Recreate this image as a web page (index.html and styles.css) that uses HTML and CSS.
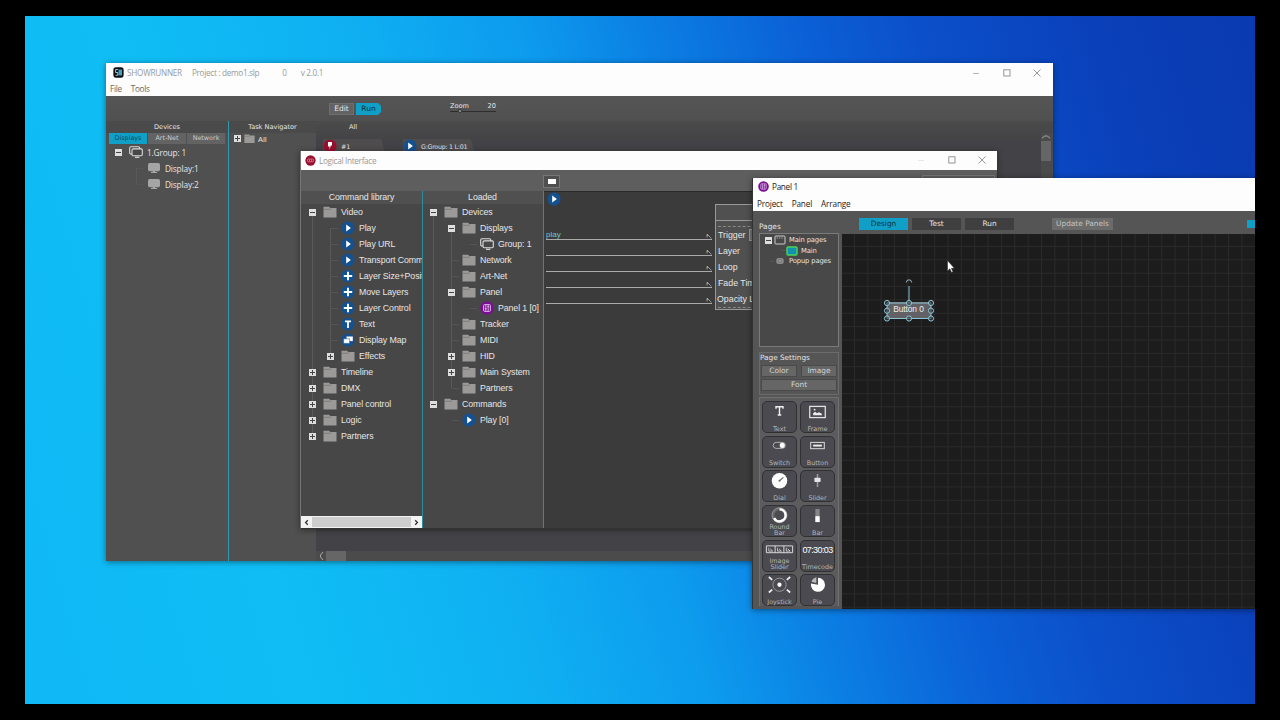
FILE: index.html
```html
<!DOCTYPE html>
<html lang="en">
<head>
    <meta charset="UTF-8">
    <title>Showrunner</title>
    <link rel="stylesheet" href="styles.css">
</head>
<body>

    <!-- shared icons -->
    <svg class="defs">
        <symbol id="folder" viewBox="0 0 14 12"><path d="M.5.8h5.600l1.200 1.300H13.500V11.600H.5z" fill="#9c9a99"/><path d="M.5 3.300h6.500l1.200-1" stroke="#6b6969" stroke-width=".6" fill="none"/></symbol>
        <symbol id="play" viewBox="0 0 14 14"><circle cx="7" cy="7" r="6.6" fill="#15508f"/><path d="M5.2 3.4v7.2L9.9 7z" fill="#fff"/></symbol>
        <symbol id="plus" viewBox="0 0 14 14"><circle cx="7" cy="7" r="6.6" fill="#15508f"/><path d="M7 2.8v8.4M2.8 7h8.4" stroke="#fff" stroke-width="1.9"/></symbol>
        <symbol id="tee" viewBox="0 0 14 14"><circle cx="7" cy="7" r="6.6" fill="#15508f"/><path d="M4 4.3h6M7 4.3V11" stroke="#fff" stroke-width="1.8"/></symbol>
        <symbol id="map" viewBox="0 0 14 14"><circle cx="7" cy="7" r="6.6" fill="#15508f"/><path d="M5.5 3.5h6.3v4.6H5.5z" fill="#fff"/><path d="M2.6 5.8h6v4.6h-6z" fill="#fff" stroke="#15508f" stroke-width=".5"/></symbol>
        <symbol id="group" viewBox="0 0 14 12"><rect x=".7" y=".8" width="10" height="7.2" rx="1.2" fill="#474747" stroke="#ddd" stroke-width="1.1"/><rect x="3" y="2.9" width="10.3" height="6.8" rx="1.2" fill="#474747" stroke="#ddd" stroke-width="1.1"/><path d="M6 11.3h4.3" stroke="#ddd" stroke-width="1.2"/></symbol>
        <symbol id="display" viewBox="0 0 14 12"><rect x="1" y="1" width="12" height="8.200" rx="1.800" fill="#a5a5a5"/><path d="M5.800 8.500h2.400v1.500h1.800v1H4v-1h1.800z" fill="#a5a5a5"/></symbol>
        <symbol id="panel" viewBox="0 0 14 14"><circle cx="7" cy="7" r="6.7" fill="#7a0f94"/><rect x="3.6" y="3.6" width="6.8" height="6.8" rx="1" fill="none" stroke="#e6c9ee" stroke-width=".9"/><path d="M5.8 4v6M8.2 4v6M4.8 7.8h2M7.2 5.8h2" stroke="#e6c9ee" stroke-width=".8"/></symbol>
        <symbol id="close" viewBox="0 0 10 10"><path d="M1.5 1.5l7 7M8.5 1.5l-7 7" stroke="#8b8b8b" stroke-width=".9"/></symbol>
        <symbol id="max" viewBox="0 0 10 10"><rect x="1.8" y="1.8" width="6.2" height="6.2" fill="none" stroke="#8b8b8b" stroke-width=".9"/></symbol>
        <symbol id="min" viewBox="0 0 10 10"><path d="M2 5.5h6" stroke="#a5a5a5" stroke-width=".8"/></symbol>
    </svg>

    <div class="desktop">

        <!-- main window -->
        <div class="window main">
            <div class="titlebar">
                <svg class="app" viewBox="0 0 12 12"><rect x=".4" y=".4" width="11.200" height="11.200" rx="2.800" fill="#0d1013"/><path d="M6 2.800h3.800v6.400H6z" fill="#3f9fc4"/><path d="M5.600 2.800H2.800V6h2.400v3H2.800" fill="none" stroke="#cfe6ee" stroke-width=".9"/></svg>
                <span class="t1">SHOWRUNNER</span><span class="t2">Project : demo1.slp</span><span class="t3">0</span><span>v 2.0.1</span>
                <div class="winctl"><svg><use href="#min"/></svg><svg><use href="#max"/></svg><svg><use href="#close"/></svg></div>
            </div>
            <div class="menu grey"><span>File</span><span>Tools</span></div>
            <div class="maintools">
                <span class="edit">Edit</span><span class="run">Run</span>
                <div class="zoom"><span>Zoom</span><span>20</span><i></i></div>
            </div>
            <div class="cols">
                <div class="devices">
                    <h3>Devices</h3>
                    <div class="devtabs"><span class="on">Displays</span><span>Art-Net</span><span>Network</span></div>
                    <div class="wide">
                        <div class="row"><b class="minus"></b><svg><use href="#group"/></svg>1.Group: 1</div>
                        <div class="tree kids">
                            <div class="row"><b class="stub"></b><svg><use href="#display"/></svg>Display:1</div>
                            <div class="row"><b class="stub"></b><svg><use href="#display"/></svg>Display:2</div>
                        </div>
                    </div>
                </div>
                <div class="tasks">
                    <h3>Task Navigator</h3>
                    <div class="row"><b class="plus"></b><svg><use href="#folder"/></svg>All</div>
                </div>
                <div class="stage">
                    <h3>All</h3>
                    <div class="cues">
                        <div class="cue">
                            <svg viewBox="0 0 14 14"><circle cx="7" cy="7" r="6.6" fill="#98102f"/><path d="M5 3h4v3.6H7.8L6.6 11V7.6H5z" fill="#fff"/></svg>#1
                        </div>
                        <div class="cue group"><svg><use href="#play"/></svg>G:Group: 1 L:01</div>
                    </div>
                    <div class="vscroll">
                        <svg viewBox="0 0 10 6"><path d="M.8 4.2L3.8 2h2.4l3 2.2" fill="none" stroke="#bbb" stroke-width=".8"/></svg><i></i>
                    </div>
                    <div class="hscroll">
                        <svg viewBox="0 0 6 10"><path d="M4.5 1L2 4v2l2.5 3" fill="none" stroke="#bbb" stroke-width=".8"/></svg><i></i>
                    </div>
                </div>
            </div>
        </div>

        <!-- logical interface -->
        <div class="window logic">
            <div class="titlebar">
                <svg class="app" viewBox="0 0 12 12"><circle cx="6" cy="6" r="5.600" fill="#98102f"/><rect x="2.8" y="4.4" width="6.4" height="3" rx=".6" fill="none" stroke="#d98b9b" stroke-width=".8"/><path d="M4.9 4.6v2.6M7.1 4.6v2.6" stroke="#d98b9b" stroke-width=".7"/></svg>
                <span>Logical Interface</span>
                <div class="winctl"><svg class="faint"><use href="#min"/></svg><svg><use href="#max"/></svg><svg><use href="#close"/></svg></div>
            </div>
            <div class="logictools"><span class="stop"></span><span class="ghost"></span></div>
            <div class="cols">
                <div class="pane">
                    <h4>Command library</h4>
                    <div class="tree">
                        <div class="row"><b class="minus"></b><svg><use href="#folder"/></svg>Video</div>
                        <div class="tree kids">
                            <div class="row"><b class="stub"></b><svg><use href="#play"/></svg>Play</div>
                            <div class="row"><b class="stub"></b><svg><use href="#play"/></svg>Play URL</div>
                            <div class="row"><b class="stub"></b><svg><use href="#play"/></svg>Transport Command</div>
                            <div class="row"><b class="stub"></b><svg><use href="#plus"/></svg>Layer Size+Position</div>
                            <div class="row"><b class="stub"></b><svg><use href="#plus"/></svg>Move Layers</div>
                            <div class="row"><b class="stub"></b><svg><use href="#plus"/></svg>Layer Control</div>
                            <div class="row"><b class="stub"></b><svg><use href="#tee"/></svg>Text</div>
                            <div class="row"><b class="stub"></b><svg><use href="#map"/></svg>Display Map</div>
                            <div class="row"><b class="plus"></b><svg><use href="#folder"/></svg>Effects</div>
                        </div>
                        <div class="row"><b class="plus"></b><svg><use href="#folder"/></svg>Timeline</div>
                        <div class="row"><b class="plus"></b><svg><use href="#folder"/></svg>DMX</div>
                        <div class="row"><b class="plus"></b><svg><use href="#folder"/></svg>Panel control</div>
                        <div class="row"><b class="plus"></b><svg><use href="#folder"/></svg>Logic</div>
                        <div class="row"><b class="plus"></b><svg><use href="#folder"/></svg>Partners</div>
                    </div>
                    <div class="libscroll">
                        <svg viewBox="0 0 11 11"><path d="M6.8 3.3L4.6 5.5l2.2 2.2" fill="none" stroke="#333" stroke-width="1.3"/></svg>
                        <i></i>
                        <svg viewBox="0 0 11 11"><path d="M4.2 3.3l2.2 2.2-2.2 2.2" fill="none" stroke="#333" stroke-width="1.3"/></svg>
                    </div>
                </div>
                <div class="pane loaded">
                    <h4>Loaded</h4>
                    <div class="tree">
                        <div class="row"><b class="minus"></b><svg><use href="#folder"/></svg>Devices</div>
                        <div class="tree kids">
                            <div class="row"><b class="minus"></b><svg><use href="#folder"/></svg>Displays</div>
                            <div class="row deep"><b class="stub"></b><svg><use href="#group"/></svg>Group: 1</div>
                            <div class="row"><b class="stub"></b><svg><use href="#folder"/></svg>Network</div>
                            <div class="row"><b class="stub"></b><svg><use href="#folder"/></svg>Art-Net</div>
                            <div class="row"><b class="minus"></b><svg><use href="#folder"/></svg>Panel</div>
                            <div class="row deep"><b class="stub"></b><svg><use href="#panel"/></svg>Panel 1 [0]</div>
                            <div class="row"><b class="stub"></b><svg><use href="#folder"/></svg>Tracker</div>
                            <div class="row"><b class="stub"></b><svg><use href="#folder"/></svg>MIDI</div>
                            <div class="row"><b class="plus"></b><svg><use href="#folder"/></svg>HID</div>
                            <div class="row"><b class="plus"></b><svg><use href="#folder"/></svg>Main System</div>
                            <div class="row"><b class="stub"></b><svg><use href="#folder"/></svg>Partners</div>
                        </div>
                        <div class="row"><b class="minus"></b><svg><use href="#folder"/></svg>Commands</div>
                    </div>
                    <div class="row cmd"><b class="stub"></b><svg><use href="#play"/></svg>Play [0]</div>
                </div>
                <div class="patch">
                    <div class="wires">
                        <svg class="start"><use href="#play"/></svg>
                        <div class="wire">play<svg viewBox="0 0 6 6"><path d="M1 4.5V1l4.5 4.5M1 2.5h1.5" fill="none" stroke="#aaa" stroke-width=".8"/></svg></div>
                        <div class="wire"><svg viewBox="0 0 6 6"><path d="M1 4.5V1l4.5 4.5M1 2.5h1.5" fill="none" stroke="#aaa" stroke-width=".8"/></svg></div>
                        <div class="wire"><svg viewBox="0 0 6 6"><path d="M1 4.5V1l4.5 4.5M1 2.5h1.5" fill="none" stroke="#aaa" stroke-width=".8"/></svg></div>
                        <div class="wire"><svg viewBox="0 0 6 6"><path d="M1 4.5V1l4.5 4.5M1 2.5h1.5" fill="none" stroke="#aaa" stroke-width=".8"/></svg></div>
                        <div class="wire"><svg viewBox="0 0 6 6"><path d="M1 4.5V1l4.5 4.5M1 2.5h1.5" fill="none" stroke="#aaa" stroke-width=".8"/></svg></div>
                    </div>
                    <div class="node">
                        <div class="nodehead"></div>
                        <div class="params">
                            <p>Trigger<i></i></p><p>Layer</p><p>Loop</p><p>Fade Time</p><p class="last">Opacity Le</p>
                        </div>
                    </div>
                </div>
            </div>
        </div>

        <!-- panel editor -->
        <div class="window editor">
            <div class="titlebar">
                <svg class="app"><use href="#panel"/></svg>
                <span>Panel 1</span>
            </div>
            <div class="menu"><span>Project</span><span>Panel</span><span>Arrange</span></div>
            <div class="cols">
                <div class="side">
                    <div class="label">Pages</div>
                    <div class="pages">
                        <div class="row"><b class="minus"></b><svg viewBox="0 0 12 10"><rect x="1" y="1" width="10" height="8" rx=".8" fill="none" stroke="#ddd" stroke-width=".9"/><path d="M2.5 3h7" stroke="#bbb" stroke-width=".8" stroke-dasharray="1.4 1"/></svg>Main pages</div>
                        <div class="row in"><b class="stub"></b><svg viewBox="0 0 12 10"><rect x="1" y="1" width="10" height="8" rx="1" fill="#1391b3" stroke="#48d455" stroke-width="1.4"/></svg>Main</div>
                        <div class="row"><b class="stub"></b><svg viewBox="0 0 12 10"><rect x="3" y="2.8" width="6" height="4.4" rx=".6" fill="#666" stroke="#bbb" stroke-width=".8"/><path d="M4.5 5h3" stroke="#ddd" stroke-width=".8"/></svg>Popup pages</div>
                    </div>
                    <div class="settings">
                        <div class="label">Page Settings</div>
                        <div class="btns"><span>Color</span><span>Image</span><span class="full">Font</span></div>
                    </div>
                    <div class="palette">
                        <div class="tool"><svg viewBox="0 0 34 20"><path d="M13.400 7V4.800h7.200V7M17 5v8.500M15.200 13.400h3.600" fill="none" stroke="#eee" stroke-width="1.500"/></svg>Text</div>
                        <div class="tool"><svg viewBox="0 0 34 20"><rect x="9" y="4.500" width="16" height="11.500" fill="none" stroke="#e4e4e4" stroke-width="1.300"/><path d="M12.500 13.500v-2l2-1.500 2 1.500 2-1 3 1.500v1.500z" fill="#eee"/><circle cx="14" cy="7.800" r="1" fill="#eee"/></svg>Frame</div>
                        <div class="tool"><svg viewBox="0 0 34 20"><rect x="10.500" y="5.500" width="12.500" height="6.200" rx="3.100" fill="none" stroke="#bbb" stroke-width=".9"/><circle cx="19.800" cy="8.600" r="2.600" fill="#fff"/></svg>Switch</div>
                        <div class="tool"><svg viewBox="0 0 34 20"><rect x="10" y="5.500" width="14" height="6.500" fill="none" stroke="#ddd" stroke-width="1"/><path d="M12.500 8.800h9" stroke="#eee" stroke-width="2"/></svg>Button</div>
                        <div class="tool"><svg viewBox="0 0 34 20"><circle cx="17" cy="10" r="8" fill="#fff"/><path d="M17 10l4-3.500" stroke="#666" stroke-width="1.200"/><circle cx="17" cy="10" r="1" fill="#666"/></svg>Dial</div>
                        <div class="tool"><svg viewBox="0 0 34 20"><path d="M17 3v13.500" stroke="#9b9ba0" stroke-width="1.600"/><rect x="13.800" y="7" width="6.400" height="4.400" rx=".8" fill="#e4e4e4"/></svg>Slider</div>
                        <div class="tool two"><svg viewBox="0 0 34 20"><circle cx="17" cy="9.500" r="6.300" fill="none" stroke="#666" stroke-width="2.400"/><path d="M17 3.200a6.300 6.300 0 1 1-5.600 9.200" fill="none" stroke="#fff" stroke-width="2.600"/><circle cx="17" cy="9.500" r="7.700" fill="none" stroke="#ccc" stroke-width=".6"/></svg>Round<br>Bar</div>
                        <div class="tool"><svg viewBox="0 0 34 20"><rect x="14.800" y="3" width="4.400" height="13.500" fill="#85858a"/><rect x="14.800" y="10.500" width="4.400" height="6" fill="#fff"/></svg>Bar</div>
                        <div class="tool two"><svg viewBox="0 0 34 20"><path d="M3.500 5h27v7h-27zM12.500 5v7M21.500 5v7" fill="none" stroke="#ddd" stroke-width="1"/><path d="M6 7v3.400h4L7.500 8M15 7v3.400h4L16.500 8M24 7v3.400h4L25.500 8" fill="none" stroke="#ddd" stroke-width=".8"/></svg>Image<br>Slider</div>
                        <div class="tool"><div class="clock">07:30:03</div>Timecode</div>
                        <div class="tool"><svg viewBox="0 0 34 20"><circle cx="17" cy="10" r="6.800" fill="none" stroke="#aaa" stroke-width=".8"/><circle cx="17" cy="10" r="2.200" fill="#fff"/><path d="M9.500 5L6 2M24.500 5L28 2M9.500 15L6 18M24.500 15L28 18" stroke="#eee" stroke-width="1.800"/></svg>Joystick</div>
                        <div class="tool"><svg viewBox="0 0 34 20"><path d="M17.500 10V2.700a7.300 7.300 0 1 1-7.200 6z" fill="#fff"/><path d="M15.800 8.300L10.800 7A7 7 0 0 1 15.800 2.300z" fill="#bbb"/></svg>Pie</div>
                    </div>
                </div>
                <div class="work">
                    <div class="modes"><span class="on">Design</span><span>Test</span><span>Run</span><span class="update">Update Panels</span><i></i></div>
                    <div class="canvas">
                        <div class="item">Button 0
                            <svg viewBox="0 0 52 44">
                                <path d="M4 25h44v15.500H4zM26 8v17" fill="none" stroke="#8ac4d4" stroke-width="1"/>
                                <path d="M23.300 4.500a2.700 2.700 0 0 1 5.400 0" fill="none" stroke="#b5d6dc" stroke-width=".8"/>
                                <g fill="#35383a" fill-opacity=".6" stroke="#8ac4d4" stroke-width="1">
                                    <circle cx="4" cy="25" r="2.600"/><circle cx="26" cy="25" r="2.600"/><circle cx="48" cy="25" r="2.600"/>
                                    <circle cx="4" cy="32.700" r="2.600"/><circle cx="48" cy="32.700" r="2.600"/>
                                    <circle cx="4" cy="40.500" r="2.600"/><circle cx="26" cy="40.500" r="2.600"/><circle cx="48" cy="40.500" r="2.600"/>
                                </g>
                            </svg>
                        </div>
                    </div>
                </div>
            </div>
        </div>

        <svg class="cursor" viewBox="0 0 8 13"><path d="M.5.5v10.500l2.400-2.200 1.600 3.600 1.500-.7-1.600-3.400h3z" fill="#fff" stroke="#222" stroke-width=".5"/></svg>
    </div>

</body>
</html>
```

FILE: styles.css
```css
*, *::before, *::after {
    box-sizing: border-box;
}

body {
    margin: 0;
    height: 720px;
    padding: 16px 25px;
    background: #000;
    overflow: hidden;
    font-family: "Liberation Sans", Arial, sans-serif;
    font-size: 8px;
    color: #e6e6e6;
}

h3, h4, p {
    margin: 0;
    font-weight: normal;
}

svg {
    display: block;
    flex: none;
}

.defs {
    position: absolute;
    width: 0;
    height: 0;
}

.desktop {
    position: relative;
    width: 1230px;
    height: 688px;
    overflow: hidden;
    background: linear-gradient(74deg, #10b8f6 0%, #0fbef4 20%, #0fb0f2 36%, #0d9cee 48%, #0b80e4 57%, #0b60d6 68%, #0b50ca 76%, #0a3fb8 90%, #0a3ab0 100%);
}

/* windows */

.window {
    position: absolute;
    display: flex;
    flex-direction: column;
    overflow: hidden;
    white-space: nowrap;
    box-shadow: 0 1px 6px rgba(0, 0, 0, 0.45);
}

.titlebar, .menu {
    display: flex;
    align-items: center;
    flex: none;
    background: #fdfdfd;
    color: #999;
    font-family: "Open Sans", sans-serif;
    font-size: 8.2px;
    letter-spacing: -0.3px;
}

.titlebar .app {
    width: 11px;
    height: 11px;
}

.winctl {
    display: flex;
    margin-left: auto;
}

.winctl svg {
    width: 10px;
    height: 10px;
    margin-left: 20.3px;
}

.winctl .faint {
    opacity: 0.3;
}

.menu {
    color: #222;
}

.menu.grey {
    color: #666;
}

.cols {
    display: flex;
    flex: 1;
    min-height: 0;
}

/* trees */

.tree {
    background: linear-gradient(#5a5a5a, #5a5a5a) 9px 8px / 1px calc(100% - 16px) no-repeat;
}

.kids {
    margin-left: 18px;
}

.row {
    display: flex;
    align-items: center;
    height: 16px;
    letter-spacing: -0.15px;
}

.row svg {
    width: 14px;
    height: 14px;
    margin: 0 4px 0 2px;
}

.row b {
    position: relative;
    width: 18px;
    height: 7px;
    flex: none;
}

.row .minus::before, .row .plus::before {
    content: "";
    position: absolute;
    left: 6px;
    top: 0;
    width: 7px;
    height: 7px;
    background: linear-gradient(#444, #444) center / 5px 1px no-repeat, #dedede;
    border: 1px solid #dedede;
}

.row .plus::before {
    background: linear-gradient(#444, #444) center / 5px 1px no-repeat, linear-gradient(#444, #444) center / 1px 5px no-repeat, #dedede;
}

.row .stub {
    background: linear-gradient(#555, #555) 10px 3px / 7px 1px no-repeat;
}

.row.deep {
    padding-left: 18px;
}

/* main window */

.main {
    left: 81px;
    top: 47px;
    width: 947px;
    height: 498px;
    background: #505050;
}

.main .titlebar {
    height: 19px;
    padding: 0 11px 0 7px;
}

.main .titlebar .app {
    margin-right: 3px;
}

.t1 {
    margin-right: 10px;
    letter-spacing: -0.25px;
}

.t2 {
    margin-right: 23px;
}

.t3 {
    margin-right: 14px;
}

.main .menu {
    height: 14px;
    gap: 9px;
    padding: 0 0 1px 4px;
}

.maintools {
    display: flex;
    align-items: center;
    height: 25px;
    flex: none;
    padding-left: 223px;
    background: linear-gradient(#555, #505050);
    font-family: "DejaVu Sans", sans-serif;
    font-size: 7.5px;
}

.edit, .run {
    height: 12px;
    line-height: 12px;
    text-align: center;
    margin-top: 1px;
}

.edit {
    width: 25px;
    background: #636363;
    border: 1px solid #6e6e6e;
    line-height: 10px;
}

.run {
    width: 25px;
    margin-left: 2px;
    background: #109fc6;
    color: #0b3340;
    clip-path: polygon(0 0, 88% 0, 100% 25%, 100% 75%, 88% 100%, 0 100%);
}

.zoom {
    position: relative;
    display: flex;
    justify-content: space-between;
    width: 46px;
    height: 10px;
    margin: -4px 0 0 69px;
    font-size: 6.6px;
    border-bottom: 1px solid #2e2e2e;
}

.zoom i {
    position: absolute;
    left: 8px;
    top: 7px;
    width: 4px;
    height: 4px;
    background: #aaa;
    border: 1px solid #333;
    border-radius: 50%;
}

.main h3 {
    height: 12px;
    line-height: 12px;
    font-family: "DejaVu Sans", sans-serif;
    font-size: 6.6px;
    text-align: center;
    background: #4a4a4a;
}

.devices {
    width: 123px;
    border-right: 1px solid #2d9aab;
}

.devtabs {
    display: flex;
    gap: 1px;
    padding: 0 3px;
    font-family: "DejaVu Sans", sans-serif;
    font-size: 6.4px;
}

.devtabs span {
    flex: 1;
    height: 11px;
    line-height: 11px;
    text-align: center;
    background: #636363;
    color: #ccc;
}

.devtabs .on {
    background: #109fc6;
    color: #0b4a5e;
}

.wide {
    padding-left: 3px;
    font-size: 8.3px;
    font-family: "Open Sans", sans-serif;
}

.tasks {
    width: 87px;
}

.tasks .row {
    height: 11px;
    padding-left: 2px;
    font-family: "Open Sans", sans-serif;
}

.tasks .row b {
    width: 13px;
}

.tasks .row b::before {
    left: 3px;
}

.tasks .row svg {
    width: 11px;
    height: 11px;
    margin: 0 3px 0 0;
}

.stage {
    display: grid;
    grid-template: 12px 1fr 10px / 1fr 12px;
    flex: 1;
    background: linear-gradient(#4b4b4b, #434246 20px);
}

.stage h3 {
    grid-column: 1 / 3;
    padding-left: 33px;
    text-align: left;
    background: none;
}

.cues {
    display: flex;
    padding: 6px 0 0 7px;
    font-family: "DejaVu Sans", sans-serif;
    font-size: 6.3px;
}

.cue {
    display: flex;
    align-items: center;
    width: 62px;
    height: 14px;
    margin-right: 18px;
    background: #4f4c4e;
    letter-spacing: -0.1px;
    clip-path: polygon(0 0, 94% 0, 100% 100%, 0 100%);
}

.cue svg {
    width: 14px;
    height: 14px;
    margin-right: 4px;
}

.cue.group {
    width: 72px;
    letter-spacing: -0.25px;
}

.vscroll {
    background: #4b4b4b;
}

.vscroll svg {
    width: 10px;
    height: 8px;
}

.vscroll i {
    display: block;
    width: 10px;
    height: 20px;
    background: #666;
}

.hscroll {
    display: flex;
    grid-column: 1 / 3;
    background: #4b4b4b;
}

.hscroll svg {
    width: 7px;
    height: 10px;
    margin: 0 1px 0 2px;
}

.hscroll i {
    width: 20px;
    background: #666;
}

/* logical interface */

.logic {
    left: 275px;
    top: 135px;
    width: 697px;
    height: 378px;
    background: #474747;
    border-left: 1px solid #777;
    border-bottom: 1px solid #333;
}

.logic .titlebar {
    height: 19px;
    margin-left: -1px;
    padding: 0 10px 1px 5px;
}

.logic .app {
    margin-right: 3px;
}

.logictools {
    display: flex;
    justify-content: space-between;
    height: 21px;
    flex: none;
    padding: 5px 2px 0 242px;
    background: #5e5e5e;
}

.stop {
    width: 17px;
    height: 13px;
    border: 1px solid #777;
    background: linear-gradient(#fff, #fff) center / 8px 5px no-repeat, #4f4f4f;
}

.ghost {
    width: 73px;
    height: 12px;
    border: 1px solid #777;
}

.pane {
    display: flex;
    flex-direction: column;
    width: 122px;
    overflow: hidden;
    border-right: 1px solid #2f8c9f;
    padding-left: 1px;
}

.loaded {
    width: 121px;
    padding-left: 0;
}

.pane, .node {
    font-family: "Liberation Sans Narrow", "Liberation Sans", sans-serif;
    font-size: 8.8px;
}

.pane h4 {
    height: 13px;
    line-height: 13px;
    text-align: center;
    background: #505050;
    letter-spacing: -0.1px;
    margin-left: -1px;
    flex: none;
}

.pane > .tree, .pane > .cmd {
    margin-left: 1px;
}

.pane .row {
    letter-spacing: -0.1px;
}

.pane > .cmd {
    padding-left: 18px;
}

.libscroll {
    display: flex;
    align-items: center;
    height: 12px;
    margin: auto 0 0 -1px;
    background: #f3f3f3;
}

.libscroll i {
    flex: 1;
    height: 10px;
    background: #cdcdcd;
}

.libscroll svg {
    width: 11px;
    height: 11px;
}

.patch {
    display: flex;
    flex: 1;
    background: #3b3b3b;
    border-top: 1px solid #2a2a2a;
}

.wires {
    width: 168px;
    padding-left: 2px;
}

.start {
    width: 14px;
    height: 14px;
    margin: 0 0 18px 1px;
}

.wire {
    display: flex;
    align-items: flex-end;
    height: 16px;
    line-height: 9px;
    color: #6fc7cf;
    border-bottom: 1px solid #aaa;
}

.wire svg {
    width: 6px;
    height: 6px;
    margin-left: auto;
}

.node {
    width: 120px;
    height: 106px;
    margin: 12px 0 0 3px;
    border: 1px solid #999;
    background: #505050;
}

.nodehead {
    height: 16px;
    border-bottom: 1px solid #999;
}

.params {
    margin: 5px 0 0 2px;
    border-top: 1px dashed #888;
    border-bottom: 1px dashed #888;
}

.params p {
    display: flex;
    align-items: center;
    height: 16px;
}

.params .last {
    margin-left: -1px;
}

.params i {
    width: 40px;
    height: 12px;
    margin-left: 3px;
    background: #757575;
    border: 1px solid #999;
}

/* panel editor */

.editor {
    left: 727px;
    top: 162px;
    width: 510px;
    height: 431px;
    background: #555;
    border-left: 1px solid #333;
}

.editor .titlebar {
    height: 18px;
    padding: 0 0 1px 5px;
    color: #222;
}

.editor .app {
    margin-right: 3px;
}

.editor .menu {
    height: 15px;
    gap: 9px;
    padding: 0 0 1px 4px;
    letter-spacing: -0.15px;
}

.side {
    width: 89px;
    padding: 11px 3px 0 6px;
    font-family: "DejaVu Sans", sans-serif;
    font-size: 7px;
}

.label {
    height: 11px;
    line-height: 10px;
    font-size: 7.4px;
}

.pages {
    height: 114px;
    padding-top: 1px;
    border: 1px solid #7a7a7a;
    background: #484848;
}

.pages .row {
    height: 10.6px;
    font-size: 6.8px;
}

.pages .in {
    padding-left: 12px;
}

.pages .row b {
    width: 14px;
}

.pages .row b::before {
    left: 5px;
}

.pages .row svg {
    width: 12px;
    height: 10px;
    margin: 0 3px 0 0;
}

.pages .row .stub {
    background-size: 5px 1px;
}

.settings {
    height: 43px;
    margin-top: 5px;
    border: 1px solid #6b6b6b;
}

.settings .label {
    height: 12px;
    font-size: 7.3px;
}

.btns {
    display: grid;
    grid-template-columns: 1fr 1fr;
    gap: 2px 4px;
    padding: 0 1px;
}

.btns span {
    height: 12px;
    line-height: 10px;
    text-align: center;
    background: #666;
    border: 1px solid #4a4a4a;
    font-size: 7.4px;
    color: #d2d2d2;
}

.btns .full {
    grid-column: 1 / 3;
}

.palette {
    display: grid;
    grid-template-columns: 35px 35px;
    grid-auto-rows: 32px;
    gap: 2.7px 3px;
    margin-top: 2px;
    padding: 3px 2px 0;
    border: 1px solid #707070;
    border-bottom: 0;
    background: #5c5c5e;
}

.tool {
    display: flex;
    flex-direction: column;
    height: 32px;
    border: 1px solid #313134;
    border-radius: 5px;
    background: #4a4a50;
    color: #b4b4b4;
    font-size: 6.4px;
    line-height: 6px;
    text-align: center;
}

.tool svg, .clock {
    width: 33px;
    height: 19.5px;
    margin-bottom: 4px;
}

.tool.two svg {
    margin-bottom: -2px;
}

.clock {
    padding-top: 5px;
    font-family: "Liberation Sans Narrow", "Liberation Sans", sans-serif;
    font-size: 9px;
    letter-spacing: -0.6px;
    line-height: 9px;
    color: #fff;
}

.work {
    display: flex;
    flex-direction: column;
    flex: 1;
}

.modes {
    display: flex;
    align-items: center;
    gap: 4px;
    height: 23px;
    flex: none;
    padding: 3px 0 0 17px;
    font-family: "DejaVu Sans", sans-serif;
    font-size: 7.4px;
}

.modes span {
    width: 49px;
    height: 12px;
    line-height: 12px;
    text-align: center;
    background: #3f3f3f;
}

.modes .on {
    background: #109fc6;
    color: #0b3340;
}

.modes .update {
    width: 61px;
    margin-left: 34px;
    background: #6b6b6b;
    color: #c4c4c4;
    line-height: 11px;
}

.modes i {
    width: 14px;
    height: 8px;
    margin-left: 130px;
    background: #109fc6;
}

.canvas {
    position: relative;
    flex: 1;
    background:
        linear-gradient(90deg, #2a2a2a 1px, transparent 1px) 12px 0 / 13.36px 100%,
        linear-gradient(#2a2a2a 1px, transparent 1px) 0 12px / 100% 13.36px,
        #1c1c1c;
}

.item {
    position: absolute;
    left: 44.5px;
    top: 68px;
    width: 44px;
    height: 16px;
    line-height: 15px;
    text-align: center;
    background: #626266;
    color: #eee;
    font-size: 8.4px;
    letter-spacing: -0.1px;
}

.item svg {
    position: absolute;
    left: -4px;
    top: -24px;
    width: 52px;
    height: 44px;
}

.cursor {
    position: absolute;
    left: 922px;
    top: 244px;
    width: 8px;
    height: 13px;
}
```
